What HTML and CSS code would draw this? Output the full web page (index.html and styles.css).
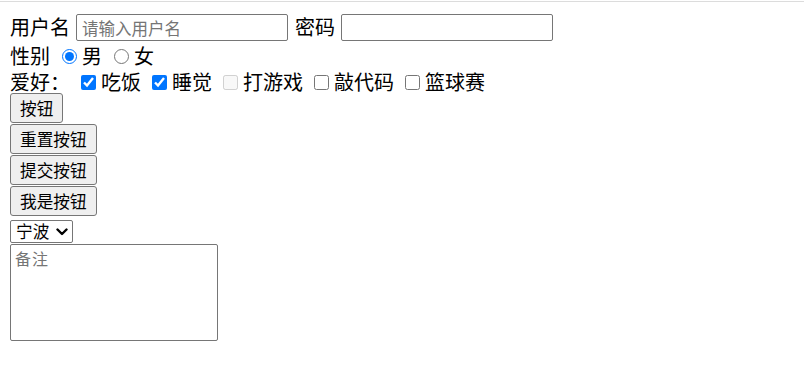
FILE: index.html
```html
<!DOCTYPE html>
<html lang="zh-CN">
<head>
<meta charset="utf-8">
<title>表单</title>
<link rel="stylesheet" href="styles.css">
</head>
<body>
<div class="topline"></div>
<form class="form">
  <div class="row row1">
    <span class="label">用户名</span>
    <input class="text-input first" type="text" placeholder="请输入用户名">
    <span class="label pw-label">密码</span>
    <input class="text-input" type="password">
  </div>
  <div class="row row2">
    <span class="label">性别</span>
    <input class="radio" type="radio" name="sex" checked>
    <span class="label">男</span>
    <input class="radio" type="radio" name="sex">
    <span class="label">女</span>
  </div>
  <div class="row row3">
    <span class="label hobby-label">爱好：</span>
    <input class="check" type="checkbox" checked>
    <span class="label">吃饭</span>
    <input class="check" type="checkbox" checked>
    <span class="label">睡觉</span>
    <input class="check" type="checkbox" disabled>
    <span class="label">打游戏</span>
    <input class="check" type="checkbox">
    <span class="label">敲代码</span>
    <input class="check" type="checkbox">
    <span class="label">篮球赛</span>
  </div>
  <div class="buttons">
    <button class="btn" type="button">按钮</button>
    <button class="btn" type="reset">重置按钮</button>
    <button class="btn" type="submit">提交按钮</button>
    <button class="btn" type="button">我是按钮</button>
  </div>
  <div class="city-wrap">
    <select class="city">
      <option>宁波</option>
    </select>
    <svg class="chevron" width="12" height="8" viewBox="0 0 12 8" aria-hidden="true">
      <path d="M1.5 1.5 L6 6 L10.5 1.5" fill="none" stroke="#000" stroke-width="2.4" stroke-linecap="round" stroke-linejoin="round"/>
    </svg>
  </div>
  <textarea class="note" placeholder="备注"></textarea>
</form>
</body>
</html>
```
FILE: styles.css
```css
html, body {
  margin: 0;
  padding: 0;
  background: #fff;
}

body {
  font-family: "Noto Sans CJK SC", "Noto Sans", sans-serif;
  font-size: 20px;
  color: #000;
}

.topline {
  height: 1px;
  margin-top: 1px;
  background: #dcdcdc;
}

.form {
  display: flex;
  flex-direction: column;
  align-items: flex-start;
  padding: 8px 10px 0;
  margin: 0;
}

.row {
  display: flex;
  align-items: center;
  white-space: nowrap;
}

.row1 {
  height: 33px;
}

.row2 {
  height: 26px;
}

.row3 {
  box-sizing: border-box;
  height: 24px;
  padding-top: 2px;
}

.label {
  display: block;
  line-height: 22px;
}

.text-input {
  box-sizing: border-box;
  width: 212px;
  height: 27px;
  margin: 2px 0 0 6px;
  padding: 0 5px;
  border: 1px solid #767676;
  border-radius: 2px;
  font-family: "Noto Sans CJK SC", sans-serif;
  font-size: 16.5px;
  color: #000;
  background: #fff;
  outline: none;
}

.text-input::placeholder {
  color: #757575;
}

.pw-label {
  margin-left: 7px;
}

.radio {
  width: 15px;
  height: 15px;
  margin: 0 5px 0 12px;
  accent-color: #0075ff;
}

.hobby-label {
  width: 60px;
}

.check {
  width: 15px;
  height: 15px;
  margin: 0 5px 0 11px;
  accent-color: #0075ff;
}

.buttons {
  display: flex;
  flex-direction: column;
  align-items: flex-start;
  gap: 1px;
}

.btn {
  box-sizing: border-box;
  height: 30px;
  padding: 0 9px;
  border: 1px solid #767676;
  border-radius: 3px;
  background: #efefef;
  font-family: "Noto Sans CJK SC", sans-serif;
  font-size: 16.67px;
  line-height: 22px;
  color: #000;
}

.city-wrap {
  position: relative;
  display: flex;
  margin-top: 4px;
}

.city {
  -webkit-appearance: none;
  appearance: none;
  box-sizing: border-box;
  width: 63px;
  height: 23px;
  margin: 0;
  padding: 0 0 0 5px;
  border: 1px solid #767676;
  border-radius: 2px;
  background: #fff;
  font-family: "Noto Sans CJK SC", sans-serif;
  font-size: 16.67px;
  line-height: 21px;
  color: #000;
  outline: none;
}

.chevron {
  position: absolute;
  right: 5px;
  top: 8px;
  pointer-events: none;
}

.note {
  box-sizing: border-box;
  width: 208px;
  height: 97px;
  margin-top: 1px;
  padding: 2px 4px;
  border: 1px solid #767676;
  border-radius: 2px;
  font-family: "Noto Sans CJK SC", sans-serif;
  font-size: 16px;
  letter-spacing: 1px;
  line-height: 22px;
  resize: none;
  outline: none;
}

.note::placeholder {
  color: #757575;
}
```
